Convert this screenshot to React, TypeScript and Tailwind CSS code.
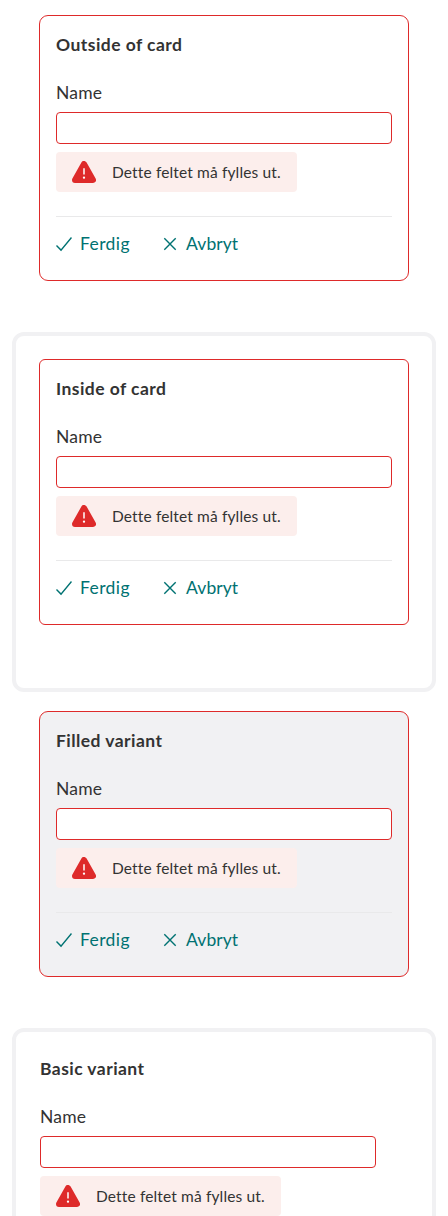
import React from 'react';

function Warning() {
  return (
    <svg width="24" height="22" viewBox="0 0 24 22" className="shrink-0">
      <path d="M12 3 21 19H3Z" fill="#de2a2a" stroke="#de2a2a" strokeWidth="6" strokeLinejoin="round" />
      <path d="M12 7.3v6.2" stroke="#fff" strokeWidth="1.5" />
      <circle cx="12" cy="16.7" r="1.15" fill="#fff" />
    </svg>
  );
}

function Fields({ title }: { title: string }) {
  return (
    <div className="w-[336px]">
      <h2 className="h-12 text-[17.5px] font-bold leading-7 tracking-[0.45px]">{title}</h2>
      <label className="block h-[33px] text-[17.5px] leading-7 tracking-[0.2px]">Name</label>
      <input className="block h-8 w-full rounded-[4px] border border-[#de2a2a] bg-white" />
      <div className="mt-2 flex h-10 w-[241px] items-center gap-4 rounded-[4px] bg-[#fceeec] pl-4 text-[15.5px] tracking-[0.14px]">
        <Warning />
        <span className="whitespace-nowrap leading-6">Dette feltet må fylles ut.</span>
      </div>
    </div>
  );
}

function Actions() {
  return (
    <div className="mt-6 flex border-t border-[#e9e9ea] pt-[13px] text-[17.5px] leading-7 text-[#007272]">
      <button className="flex w-[106px] items-center gap-2 tracking-[0.4px]">
        <svg width="16" height="28" viewBox="0 0 16 28" fill="none" stroke="currentColor" strokeWidth="1.4" className="shrink-0">
          <path d="M.5 15.6 5 20.1 15.5 7.5" />
        </svg>
        Ferdig
      </button>
      <button className="flex items-center gap-2 tracking-[0.1px]">
        <svg width="16" height="28" viewBox="0 0 16 28" fill="none" stroke="currentColor" strokeWidth="1.4" className="shrink-0">
          <path d="m2.3 8.3 11.4 11.4M13.7 8.3 2.3 19.7" />
        </svg>
        Avbryt
      </button>
    </div>
  );
}

function EditCard({ title, className }: { title: string; className: string }) {
  return (
    <section className={`h-[266px] w-[370px] border border-[#de2a2a] px-4 pt-[15px] ${className}`}>
      <Fields title={title} />
      <Actions />
    </section>
  );
}

export default function App() {
  return (
    <main className="flex h-[1216px] flex-col overflow-hidden bg-white pt-[15px] font-['Lato',sans-serif] text-[#333]">
      <EditCard title="Outside of card" className="ml-[39px] shrink-0 rounded-[9px]" />
      <div className="ml-3 mt-[51px] h-[360px] w-[424px] shrink-0 rounded-xl border-4 border-[#f1f1f3] p-[23px]">
        <EditCard title="Inside of card" className="rounded-[6px]" />
      </div>
      <EditCard title="Filled variant" className="ml-[39px] mt-[19px] shrink-0 rounded-[9px] bg-[#f1f1f3]" />
      <div className="ml-3 mt-[51px] h-[360px] w-[424px] shrink-0 rounded-xl border-4 border-[#f1f1f3] px-6 pt-[23px]">
        <Fields title="Basic variant" />
      </div>
    </main>
  );
}
